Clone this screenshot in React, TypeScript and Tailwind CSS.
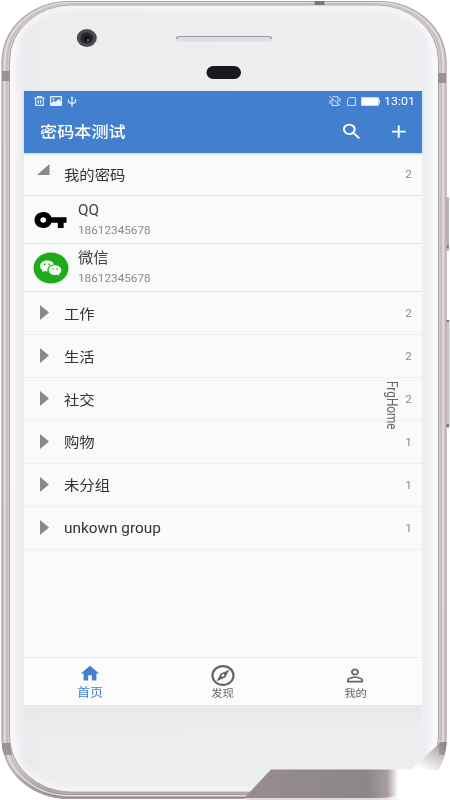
import { MdAdd, MdHome, MdOutlineExplore, MdPersonOutline, MdSearch, MdVpnKey } from 'react-icons/md';

const groups = [
  { name: '工作', count: 2 },
  { name: '生活', count: 2 },
  { name: '社交', count: 2 },
  { name: '购物', count: 1 },
  { name: '未分组', count: 1 },
  { name: 'unkown group', count: 1 },
];

function DeviceFrame() {
  return (
    <svg className="absolute inset-0" width="450" height="800" viewBox="0 0 450 800">
      <defs>
        <linearGradient id="body" x1="0" y1="0" x2="1" y2="0">
          <stop offset="0" stopColor="#f8f8fa" />
          <stop offset="0.025" stopColor="#efeff2" />
          <stop offset="0.035" stopColor="#e9eaed" />
          <stop offset="0.08" stopColor="#ecedef" />
          <stop offset="0.94" stopColor="#eceef0" />
          <stop offset="0.97" stopColor="#eeeff2" />
          <stop offset="1" stopColor="#fafafb" />
        </linearGradient>
        <linearGradient id="chin" x1="0" y1="0" x2="0" y2="1">
          <stop offset="0" stopColor="#e8e8ea" />
          <stop offset="1" stopColor="#eceef0" stopOpacity="0" />
        </linearGradient>
        <linearGradient id="metal" x1="0" y1="0" x2="0" y2="1">
          <stop offset="0" stopColor="#cfc7ca" />
          <stop offset="0.96" stopColor="#cdc5c9" />
          <stop offset="1" stopColor="#8d8488" />
        </linearGradient>
        <linearGradient id="smear" x1="0" y1="0" x2="1" y2="0">
          <stop offset="0" stopColor="#968c92" />
          <stop offset="0.8" stopColor="#8e858a" />
          <stop offset="0.93" stopColor="#a89fa4" />
          <stop offset="1" stopColor="#ffffff" />
        </linearGradient>
        <linearGradient id="corner" x1="1" y1="0" x2="0.35" y2="1">
          <stop offset="0" stopColor="#8f8789" />
          <stop offset="0.4" stopColor="#c4bec0" />
          <stop offset="1" stopColor="#ffffff" />
        </linearGradient>
        <filter id="soft">
          <feGaussianBlur stdDeviation="2" />
        </filter>
      </defs>
      <rect x="444" y="197" width="5" height="54" rx="1" fill="#b8b4b5" />
      <rect x="444" y="320" width="5.500" height="108" rx="1" fill="#c9c6c7" />
      <rect x="446" y="320" width="3" height="2" fill="#777" />
      <rect x="446" y="424" width="3" height="3" fill="#777" />
      <rect x="446" y="245" width="3" height="3" fill="#888" />
      <rect x="1.5" y="1" width="445" height="798" rx="67" ry="60" fill="url(#metal)" />
      <rect x="2" y="1.5" width="444" height="797" rx="67" ry="60" fill="none" stroke="#aaa2a5" />
      <rect x="5" y="2.8" width="438" height="793" rx="65" ry="58" fill="none" stroke="#e3dde0" strokeWidth="1.5" />
      <rect x="7" y="3.7" width="434" height="790" rx="63" ry="57" fill="none" stroke="#b5adb0" strokeWidth="0.8" />
      <rect x="9.5" y="5" width="429" height="787" rx="62" ry="56" fill="url(#body)" stroke="#8f888b" />
      <rect x="12.500" y="7.500" width="423" height="782" rx="60" ry="54" fill="none" stroke="#fafafb" strokeWidth="3" filter="url(#soft)" />
      <rect x="24" y="705" width="398" height="45" fill="url(#chin)" />
      <rect x="2" y="71" width="7.5" height="10" fill="#8b8487" opacity="0.8" />
      <rect x="438" y="73" width="8" height="10" fill="#8b8487" opacity="0.8" />
      <path d="M2 743H10L12 755H4.500Q2 749 2 743Z" fill="#8b8487" opacity="0.75" />
      <rect x="314.500" y="1" width="10" height="4" fill="#7d7679" />
      <rect x="393" y="769.5" width="57" height="31" fill="#fff" />
      <path d="M246 796 L271 769.500 H398 V800 H246Z" fill="url(#smear)" />
      <path d="M246 798 H380 Q390 797.500 396 796 V800 H240Z" fill="#fff" opacity="0.7" />
      <path d="M441 742 L411 770 H438 Q446 760 447 742Z" fill="url(#corner)" />
      <path d="M439 743 H447 Q446 749 445 755 H439Z" fill="#8b8487" opacity="0.65" />
      <path d="M450 742 H447 Q445.500 760 438 770 H450Z" fill="#fff" />
      <ellipse cx="86.800" cy="38" rx="10" ry="9" fill="#4c4c50" />
      <ellipse cx="86.800" cy="38" rx="6.500" ry="5.800" fill="#26272b" />
      <ellipse cx="86.800" cy="38.500" rx="3" ry="2.700" fill="#101114" />
      <circle cx="88" cy="40" r="1" fill="#747779" />
      <rect x="176" y="36" width="96" height="5.500" rx="2.500" fill="#d9dce4" />
      <path d="M176.500 39 Q176.500 36.500 179 36.500 H269 Q271.500 36.500 271.500 39" fill="none" stroke="#9b9da2" strokeWidth="1.200" />
      <rect x="206.500" y="66" width="34.500" height="13" rx="6.500" fill="#17191d" />
    </svg>
  );
}

function StatusBar() {
  return (
    <div className="flex h-[21px] items-center justify-between pl-[10px] pr-[7px] text-white">
      <div className="flex items-center gap-[5px]">
        <svg width="11" height="10" viewBox="0 0 11 10" fill="none" stroke="#dbe9fb" strokeWidth="1.200">
          <path d="M0 2H11M3.500 1.800V.6H7.500V1.800M1.700 2V9.400H9.300V2M4.400 4V7.500M6.600 4V7.500" />
        </svg>
        <svg width="12" height="10" viewBox="0 0 12 10">
          <rect width="12" height="10" rx="1" fill="#e8f3ff" />
          <path d="M1.300 7.500 L4 4.500 L5.500 6 L8.500 2.800 L10.700 5 V1.300 H1.300Z" fill="#4280cf" />
          <circle cx="3.500" cy="3" r="0.900" fill="#e8f3ff" />
        </svg>
        <svg width="10" height="11" viewBox="0 0 9 11" fill="none" stroke="#e4effd" strokeWidth="1.200">
          <path d="M4.500 1V10M1 3.500V5.500Q1 7 4.500 7.500Q8 7 8 5.500V3" />
          <path d="M3 2.200L4.500 .2L6 2.200ZM3.700 9.300H5.300V10.500H3.700Z" fill="#e4effd" stroke="none" />
        </svg>
      </div>
      <div className="flex items-center">
        <svg className="mr-[6px]" width="12" height="10" viewBox="0 0 12 10" fill="none" stroke="#cfe1f8">
          <path d="M3 3V9.500H9V7M3.500 .7H9V6M.5 .5L11.500 9.500M1 4V8M11 2V6" />
        </svg>
        <svg className="mr-[5px]" width="9" height="9" viewBox="0 0 9 9" fill="none" stroke="#cfe1f8">
          <path d="M2.200 .6H8.400V8.400H.6V2.300Z" />
        </svg>
        <svg className="mr-[4px]" width="19" height="9" viewBox="0 0 19 9">
          <rect width="18" height="9" rx="1" fill="#c3daf6" />
          <rect x="1" y="1" width="16" height="7" fill="#fff" />
          <rect x="18" y="2.500" width="1" height="4" fill="#dbe9fb" />
        </svg>
        <div className="w-[31px]">
          <span className="block w-max origin-left scale-x-[1.08] text-[11.500px] leading-[12px]">13:01</span>
        </div>
      </div>
    </div>
  );
}

function Toolbar() {
  return (
    <div className="flex h-[41px] items-center justify-between pl-[15.5px] pr-[11.500px] text-white">
      <h1 className="origin-left scale-x-[1.12] text-[15.3px] font-medium leading-5">密码本测试</h1>
      <div className="mb-[1px] flex items-center gap-[23.5px]">
        <MdSearch className="h-[21px] w-[23.500px]" preserveAspectRatio="none" />
        <MdAdd className="h-[21px] w-[23.500px]" preserveAspectRatio="none" />
      </div>
    </div>
  );
}

function WechatIcon() {
  return (
    <svg width="36" height="32" viewBox="0 0 36 32">
      <ellipse cx="18" cy="16" rx="17.500" ry="15.500" fill="#1dab1b" />
      <path
        d="M14 8.500c-4 0-7 2.500-7 5.500 0 1.800 1 3.300 2.600 4.300l-.6 2 2.500-1.200c1 .3 2 .4 3 .3-.7-4 2.500-7 6.500-6.900C20.400 10.100 17.500 8.500 14 8.500z"
        fill="#f4fff4"
      />
      <path
        d="M22 13.300c-3.600 0-6.300 2.200-6.300 4.900s2.700 4.900 6.300 4.900c.8 0 1.500-.1 2.200-.3l2 1-.5-1.700c1.600-.9 2.600-2.300 2.600-3.900 0-2.700-2.800-4.900-6.300-4.900z"
        fill="#f4fff4"
      />
      <g fill="#1dab1b">
        <circle cx="11.700" cy="12.300" r="0.900" />
        <circle cx="16.300" cy="12.300" r="0.900" />
        <circle cx="20" cy="17" r="0.800" />
        <circle cx="24" cy="17" r="0.800" />
      </g>
    </svg>
  );
}

function Entry({ icon, title, account }: { icon: React.ReactNode; title: string; account: string }) {
  return (
    <div className="flex h-[48.2px] border-b-[1.500px] border-[#e0e0e0]">
      <div className="flex w-[54px] items-center pl-[9px]">{icon}</div>
      <div className="pt-[4px]">
        <p className="w-max origin-left scale-x-[1.05] text-[14.600px] leading-[20px] text-[#424242]">{title}</p>
        <p className="mt-[2px] w-max origin-left scale-x-[1.12] text-[10.500px] leading-[18px] text-[#8c8c8c]">{account}</p>
      </div>
    </div>
  );
}

function Group({ name, count, open }: { name: string; count: number; open?: boolean }) {
  return (
    <div className={open ? 'flex h-[43px] items-center border-b-[1.500px] border-[#e0e0e0]' : 'flex h-[42.9px] items-center border-b border-[#efefef]'}>
      <div className="w-10 pl-[13px]">
        {open ? (
          <svg className="mb-[10px]" width="13" height="11" viewBox="0 0 13 11">
            <path d="M0 11H12.500V0Z" fill="#888" />
          </svg>
        ) : (
          <svg className="mb-[1px] ml-[3px]" width="9" height="15" viewBox="0 0 9 15">
            <path d="M0 0L9 7.500L0 15Z" fill="#888" />
          </svg>
        )}
      </div>
      <div className="flex-1 pt-[1px]">
        <span className="block w-max origin-left scale-x-[1.09] text-[14.100px] leading-5 text-[#333]">{name}</span>
      </div>
      <span className="mr-[10px] origin-right scale-x-[1.12] pt-[2px] text-[10.500px] text-[#8c8c8c]">{count}</span>
    </div>
  );
}

function BottomNav() {
  return (
    <nav className="grid h-[48px] grid-cols-3 border-t border-[#ebebeb] bg-[#fcfcfc] text-[#666]">
      <div className="flex flex-col items-center pt-[5px] text-[#4280cf]">
        <MdHome className="h-[21px] w-[22px]" preserveAspectRatio="none" />
        <span className="mt-[1px] scale-x-[1.08] text-[12.100px] leading-[16px]">首页</span>
      </div>
      <div className="flex flex-col items-center pt-[5px]">
        <MdOutlineExplore className="h-[25px] w-[28px]" preserveAspectRatio="none" />
        <span className="-mt-[1px] scale-x-[1.08] text-[10.600px] leading-[14px]">发现</span>
      </div>
      <div className="flex flex-col items-center pt-[7px]">
        <MdPersonOutline className="h-[21px] w-[24px]" preserveAspectRatio="none" />
        <span className="mt-[1px] scale-x-[1.08] text-[10.600px] leading-[14px]">我的</span>
      </div>
    </nav>
  );
}

export default function App() {
  return (
    <div className="relative h-[800px] w-[450px] overflow-hidden bg-white pl-[24px] pt-[90.5px] font-['Roboto','Noto_Sans_CJK_SC',sans-serif]">
      <DeviceFrame />
      <main className="relative flex h-[614.5px] w-[397.5px] flex-col bg-[#fafafa]">
        <header className="bg-[#4280cf] shadow-[0_1px_2px_rgba(66,128,207,0.35)]">
          <StatusBar />
          <Toolbar />
        </header>
        <div className="flex-1 pt-[0.5px]">
          <Group name="我的密码" count={2} open />
          <Entry icon={<MdVpnKey className="h-[32px] w-[35px] text-black" preserveAspectRatio="none" />} title="QQ" account="18612345678" />
          <Entry icon={<WechatIcon />} title="微信" account="18612345678" />
          {groups.map((g) => (
            <Group key={g.name} name={g.name} count={g.count} />
          ))}
        </div>
        <BottomNav />
        <div className="absolute left-[359.500px] top-[290.5px] w-4 text-[11.800px] leading-4 text-[#666]">
          <span className="block origin-center scale-x-[1.18] [writing-mode:vertical-rl]">FrgHome</span>
        </div>
      </main>
    </div>
  );
}
